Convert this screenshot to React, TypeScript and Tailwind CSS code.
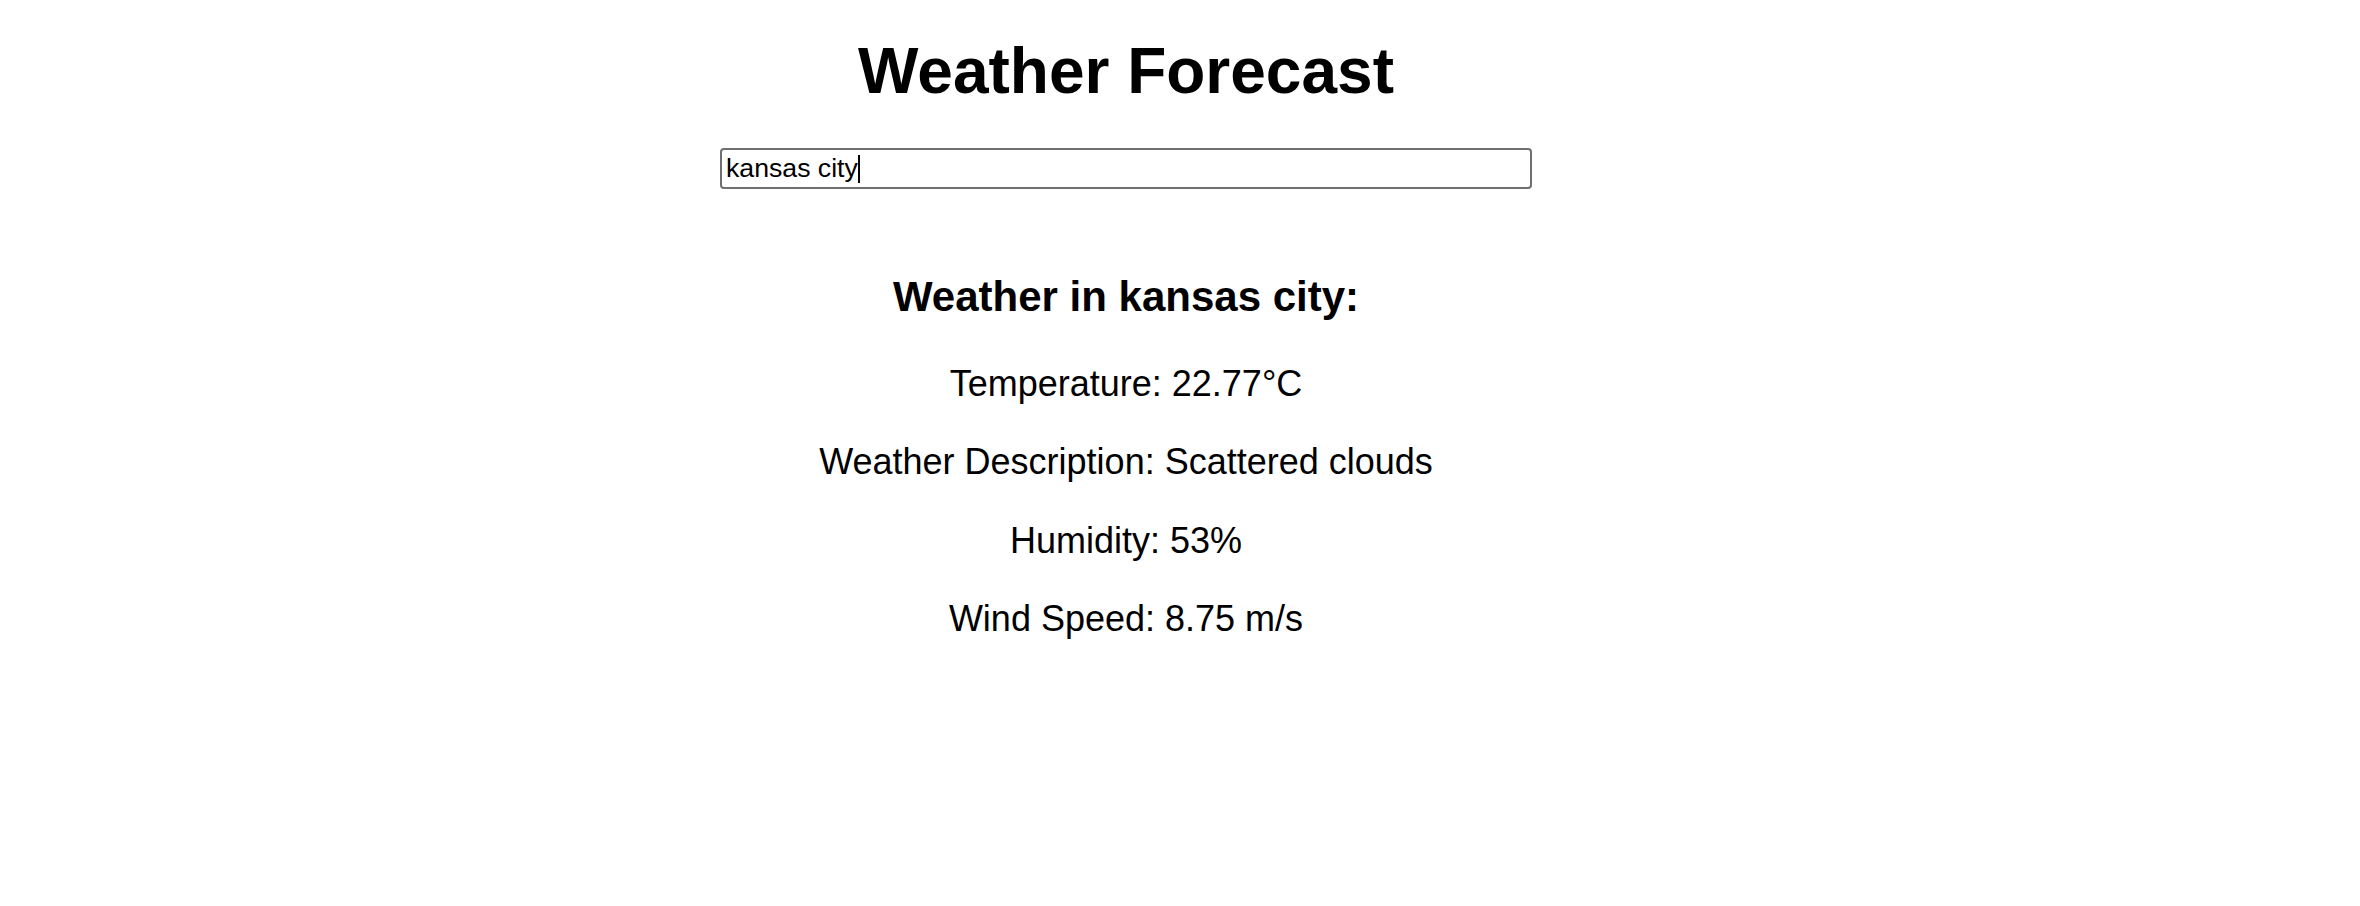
import React, { useState } from 'react';

const weather = {
  city: 'kansas city',
  temp: 22.77,
  description: 'Scattered clouds',
  humidity: 53,
  wind: 8.75,
};

export default function App() {
  const [query, setQuery] = useState('kansas city');

  return (
    <div className="min-h-[906px] w-full bg-white text-black font-['Liberation_Sans',Arial,sans-serif]">
      <div className="flex w-[2252px] flex-col items-center text-center">
        <h1 className="mt-[35px] mb-[39px] text-[64px] font-bold leading-[1.15]">Weather Forecast</h1>
        {/* search box, caret drawn as a static line so the shot doesn't catch it mid-blink */}
        <div className="relative">
          <input
            type="text"
            value={query}
            onChange={(e) => setQuery(e.target.value)}
            className="box-border h-[41px] w-[812px] rounded-[4px] border-2 border-[#6f6f6f] px-[4px] text-[26.67px] text-black caret-transparent outline-none"
          />
          <span className="pointer-events-none absolute left-[138px] top-[7px] h-[28px] w-[2px] bg-black" />
        </div>
        <div className="mt-[84px] flex flex-col items-center">
          <h2 className="mb-[42px] text-[42px] font-bold leading-[1.15]">Weather in {weather.city}:</h2>
          <div className="flex flex-col items-center gap-[37px] text-[36px] leading-[1.15]">
            <p>Temperature: {weather.temp}°C</p>
            <p>Weather Description: {weather.description}</p>
            <p>Humidity: {weather.humidity}%</p>
            <p>Wind Speed: {weather.wind} m/s</p>
          </div>
        </div>
      </div>
    </div>
  );
}
